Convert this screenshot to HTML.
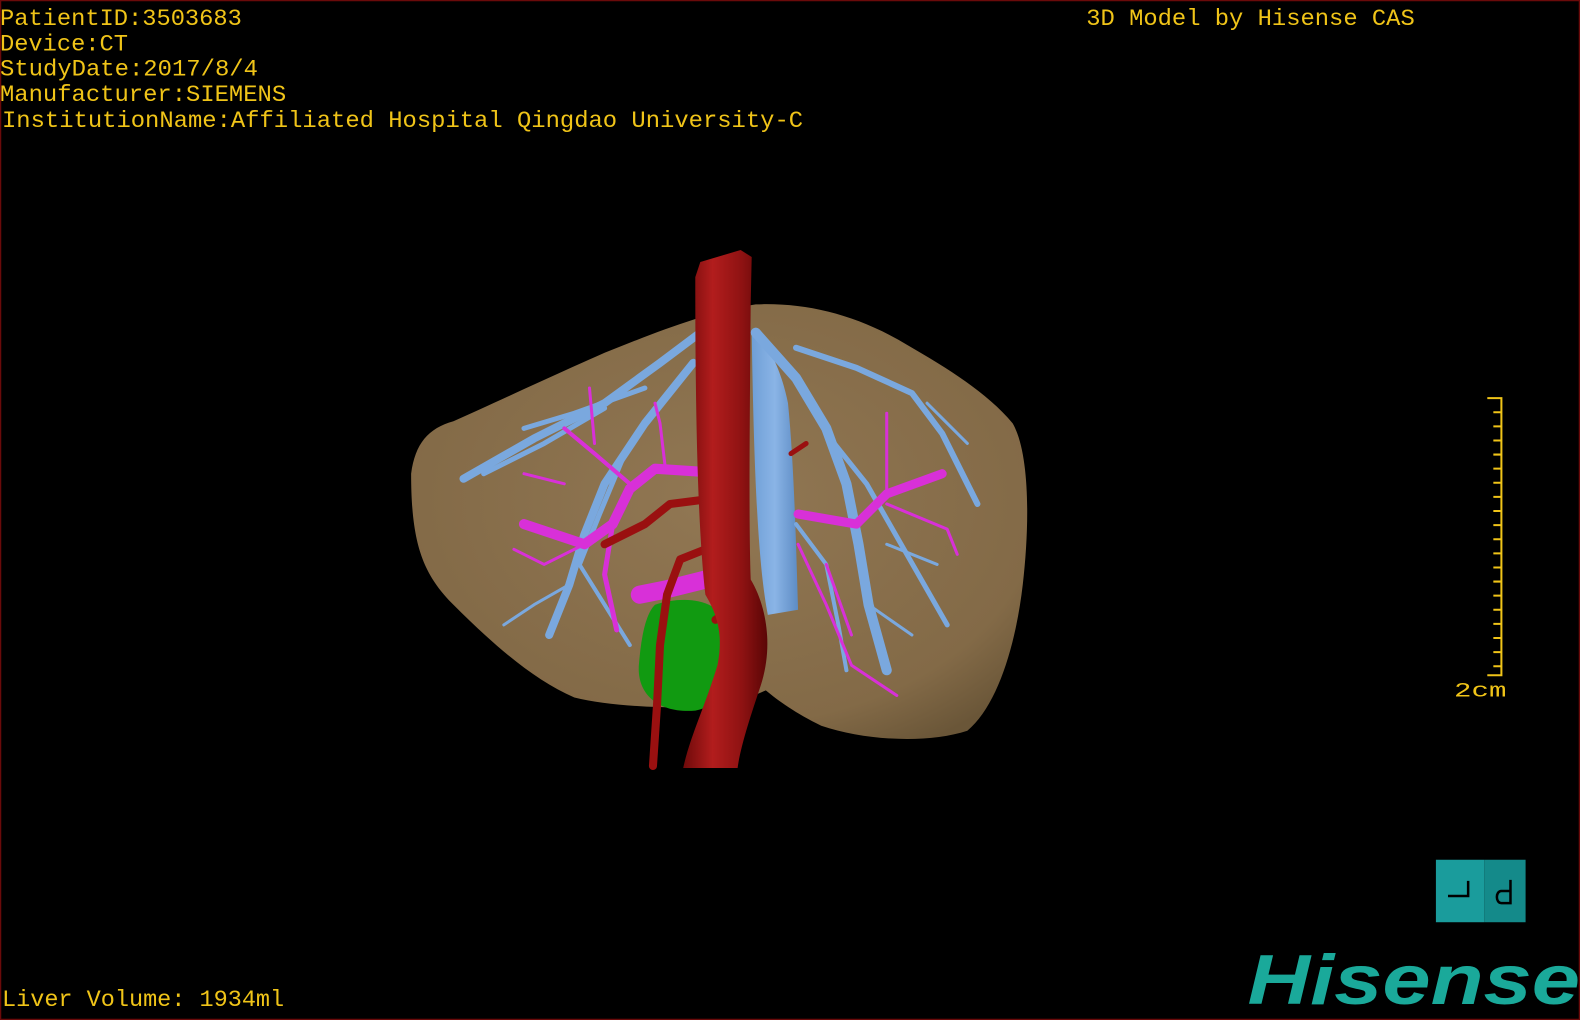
<!DOCTYPE html>
<html><head><meta charset="utf-8"><style>
html,body{margin:0;padding:0;background:#000;width:1580px;height:1020px;overflow:hidden}
svg{display:block}
.m{font-family:"Liberation Mono",monospace}
</style></head><body>
<svg width="1580" height="1020" viewBox="0 0 1568 1012" preserveAspectRatio="none" xmlns="http://www.w3.org/2000/svg">
<defs>
<radialGradient id="lv" cx="0.5" cy="0.45" r="0.65"><stop offset="0" stop-color="#917753"/><stop offset="0.8" stop-color="#836a47"/><stop offset="1" stop-color="#6a5638"/></radialGradient>
<linearGradient id="ao" x1="0" x2="1"><stop offset="0" stop-color="#6e0a0a"/><stop offset="0.35" stop-color="#b21d1d"/><stop offset="0.7" stop-color="#8e1212"/><stop offset="1" stop-color="#5a0606"/></linearGradient>
<linearGradient id="ivc" x1="0" x2="1"><stop offset="0" stop-color="#6f9fd6"/><stop offset="0.5" stop-color="#8ab4e6"/><stop offset="1" stop-color="#5d8cc4"/></linearGradient>
</defs>
<rect x="0.5" y="0.5" width="1567" height="1011" fill="#000" stroke="#6a0a0a" stroke-width="1.5"/>
<!-- liver -->
<path d="M408,470 C412,440 425,425 450,418 C490,400 550,372 600,350 C650,330 700,310 750,302 C800,300 850,312 900,342 C940,365 980,390 1005,420 C1022,450 1022,520 1015,580 C1008,640 990,700 960,725 C920,738 860,735 815,720 C790,708 772,695 760,685 L725,700 C680,704 610,702 570,692 C530,675 490,640 450,600 C420,570 408,540 408,470 Z" fill="url(#lv)"/>
<!-- IVC -->
<path d="M746,330 C760,335 775,365 782,400 C788,460 790,540 792,605 L762,610 C752,560 748,460 746,330 Z" fill="url(#ivc)"/>
<!-- blue veins -->
<g fill="none" stroke="#7aa8de" stroke-linecap="round" stroke-linejoin="round">
<path d="M695,330 L655,360 L600,400 L530,435 L460,475" stroke-width="8"/>
<path d="M640,385 L570,410 L520,425" stroke-width="5"/>
<path d="M600,405 L540,440 L480,470" stroke-width="5"/>
<path d="M688,360 L640,420 L600,480 L580,530 L565,580 L545,630" stroke-width="8"/>
<path d="M655,400 L620,450 L595,510 L575,560" stroke-width="5"/>
<path d="M575,560 L600,600 L625,640" stroke-width="4"/>
<path d="M565,580 L530,600 L500,620" stroke-width="3"/>
<path d="M750,330 L790,375 L820,425 L840,480 L852,540 L862,600 L880,665" stroke-width="10"/>
<path d="M790,345 L850,365 L905,390 L935,430 L970,500" stroke-width="6"/>
<path d="M820,430 L860,480 L900,550 L940,620" stroke-width="5"/>
<path d="M790,520 L820,560 L832,620 L840,665" stroke-width="4"/>
<path d="M862,600 L905,630" stroke-width="3"/>
<path d="M920,400 L960,440" stroke-width="3"/>
<path d="M880,540 L930,560" stroke-width="3"/>
</g>
<!-- magenta portal -->
<g fill="none" stroke="#d830d8" stroke-linecap="round" stroke-linejoin="round">
<path d="M695,468 L650,465 L625,485 L608,520 L580,540 L520,520" stroke-width="10"/>
<path d="M625,480 L590,450 L560,425" stroke-width="4"/>
<path d="M660,462 L655,420 L650,400" stroke-width="3"/>
<path d="M608,520 L600,570 L612,625" stroke-width="5"/>
<path d="M580,540 L540,560 L510,545" stroke-width="3"/>
<path d="M585,385 L590,440" stroke-width="3"/>
<path d="M560,480 L520,470" stroke-width="3"/>
<path d="M792,510 L850,520 L880,490 L935,470" stroke-width="9"/>
<path d="M880,490 L880,410" stroke-width="3"/>
<path d="M880,500 L940,525 L950,550" stroke-width="3"/>
<path d="M792,540 L820,600 L845,660 L890,690" stroke-width="3"/>
<path d="M820,560 L845,630" stroke-width="3"/>
<path d="M700,575 L660,585 L635,590" stroke-width="18"/>
</g>
<!-- green -->
<path d="M650,600 C680,590 715,595 720,620 C728,660 720,700 690,705 C655,708 632,690 634,660 C636,635 640,610 650,600 Z" fill="#119a11"/>
<!-- red arteries -->
<g fill="none" stroke="#9a1010" stroke-linecap="round" stroke-linejoin="round">
<path d="M705,495 L665,500 L640,520 L600,540" stroke-width="8"/>
<path d="M700,545 L675,555 L662,590 L655,640 L652,700 L648,760" stroke-width="8"/>
<path d="M785,450 L800,440" stroke-width="5"/>
<path d="M720,608 L710,615" stroke-width="8"/>
</g>
<!-- aorta -->
<path d="M690,275 L695,260 L735,248 L746,255 L745,300 C744,420 743,520 745,575 C760,600 768,640 755,680 C745,710 735,740 732,762 L678,762 C685,730 700,700 712,660 C718,630 712,610 700,590 C692,520 690,400 690,275 Z" fill="url(#ao)"/>
<!-- text -->
<g fill="#f0c418" font-size="23" class="m">
<text x="0" y="25" textLength="240" lengthAdjust="spacingAndGlyphs">PatientID:3503683</text>
<text x="0" y="50" textLength="127" lengthAdjust="spacingAndGlyphs">Device:CT</text>
<text x="0" y="75" textLength="256" lengthAdjust="spacingAndGlyphs">StudyDate:2017/8/4</text>
<text x="0" y="100" textLength="284" lengthAdjust="spacingAndGlyphs">Manufacturer:SIEMENS</text>
<text x="2" y="126" textLength="795" lengthAdjust="spacingAndGlyphs">InstitutionName:Affiliated Hospital Qingdao University-C</text>
<text x="1078" y="25" textLength="326" lengthAdjust="spacingAndGlyphs">3D Model by Hisense CAS</text>
<text x="2" y="998" textLength="280" lengthAdjust="spacingAndGlyphs">Liver Volume: 1934ml</text>
<text x="1443" y="691" font-size="20" textLength="52" lengthAdjust="spacingAndGlyphs">2cm</text>
</g>
<!-- scale bar -->
<g stroke="#f0c418" stroke-width="2" fill="none">
<path d="M1476,395 L1490,395 L1490,670 L1476,670"/>
<path d="M1482,409H1490M1482,423H1490M1482,437H1490M1482,451H1490M1482,465H1490M1482,479H1490M1482,493H1490M1482,507H1490M1482,521H1490M1482,535H1490M1482,549H1490M1482,563H1490M1482,577H1490M1482,591H1490M1482,605H1490M1482,619H1490M1482,633H1490M1482,647H1490M1482,661H1490"/>
</g>
<!-- logo box -->
<rect x="1425" y="853" width="48" height="62" fill="#1a9c9c"/>
<rect x="1473" y="853" width="41" height="62" fill="#148a8a"/>
<path d="M1437,889 L1457,889 L1457,874" stroke="#000" stroke-width="2.5" fill="none"/>
<path d="M1499,873 L1499,896 L1490,896 C1484,896 1484,884 1490,884 L1499,884" stroke="#000" stroke-width="2.5" fill="none"/>
<text x="1238" y="996" style="font-family:'Liberation Sans',Arial,sans-serif;font-weight:bold;font-style:italic" font-size="70" fill="#1aa99a" textLength="330" lengthAdjust="spacingAndGlyphs">Hisense</text>
</svg>
</body></html>
